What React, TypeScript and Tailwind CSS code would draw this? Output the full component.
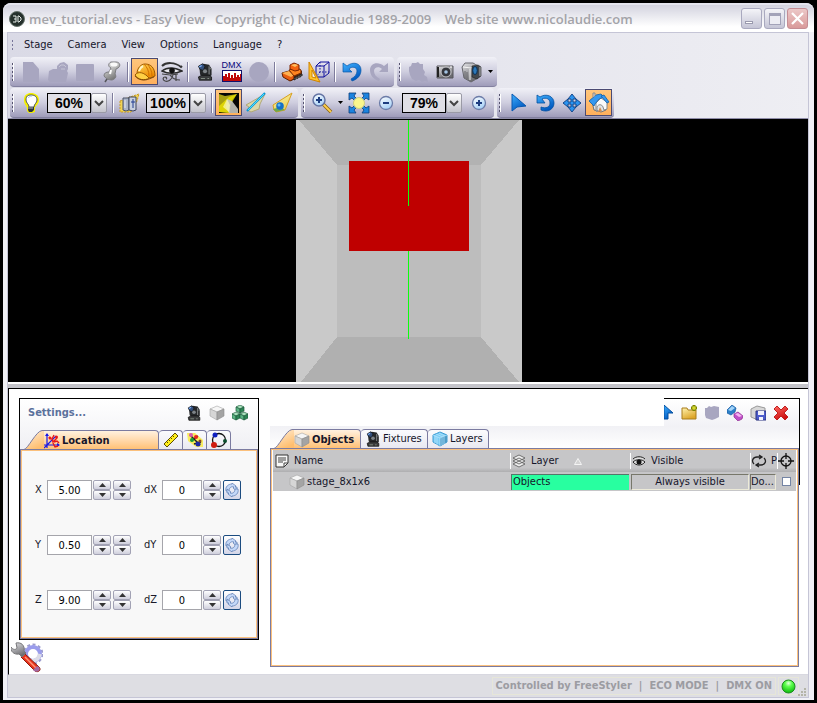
import type { ReactNode } from "react";

const UI = "font-['DejaVu_Sans_Condensed','DejaVu_Sans',sans-serif]";

function Svg({ size = 22, children }: { size?: number; children: ReactNode }) {
  return (
    <svg width={size} height={size} viewBox={`0 0 ${size} ${size}`} fill="none" aria-hidden="true" className="shrink-0">
      {children}
    </svg>
  );
}

function Gradients() {
  const list: [string, string, string][] = [
    ["gBlue", "#3fb0ff", "#0058c0"],
    ["gOrange", "#ffd95c", "#ee8a00"],
    ["gGray", "#ffffff", "#777777"],
    ["gFolder", "#fff3ae", "#dda528"],
    ["gRed", "#ff6a62", "#cc1010"],
    ["gBeam", "#fff9a8", "#e8cc5a"],
    ["gGlass", "#ffffff", "#a9d2f7"],
    ["gTab", "#fff1df", "#ffbe6e"],
    ["gSteel", "#e4e4e8", "#6c6c70"],
  ];
  return (
    <svg className="absolute size-0" aria-hidden="true">
      <defs>
        {list.map(([id, a, b]) => (
          <linearGradient key={id} id={id} x1="0" y1="0" x2="0.5" y2="1">
            <stop offset="0" stopColor={a} />
            <stop offset="1" stopColor={b} />
          </linearGradient>
        ))}
        <radialGradient id="gLed" cx="0.5" cy="0.25" r="0.75">
          <stop offset="0" stopColor="#e4ffe0" />
          <stop offset="0.35" stopColor="#5cff4c" />
          <stop offset="1" stopColor="#0cb80c" />
        </radialGradient>
      </defs>
    </svg>
  );
}

const OFF = "#a8a6c0";

const NewIcon = () => <Svg><path d="M3 1h10l6 7v13H3z" fill={OFF} /></Svg>;
const OpenIcon = () => (
  <Svg>
    <path d="M2 10l4-2h4V5l3-3 4-1 4 3v4l-1 2 1 2-2 9H3L1 19z" fill={OFF} />
    <path d="M12 6l2-2h3M17 4l2 2M14 8h4" stroke="#c6c5d6" />
  </Svg>
);
const SaveIcon = () => <Svg><rect x="2" y="3" width="18" height="17" rx="1" fill={OFF} /></Svg>;
const PinIcon = () => (
  <Svg>
    <path d="M8 15l-4 6" stroke="#55555a" strokeWidth="1.5" />
    <path d="M3 15c0-3 2-4 5-4l2-4c-3-1-3-5 0-6h5c4 0 5 4 2 6l-2 1-1 5c2 3 0 5-3 6-3 0-6-1-8-4z" fill="url(#gGray)" stroke="#7c7c80" />
    <ellipse cx="13" cy="3.500" rx="3.500" ry="2" fill="#fafafa" />
    <path d="M10 9l-1 4" stroke="#fff" strokeWidth="2" />
  </Svg>
);
const HelmetIcon = () => (
  <Svg>
    <path d="M3 13C3 7 7 3 11 3c6 0 10 4 10 12l-5 2z" fill="url(#gOrange)" stroke="#9c5800" />
    <path d="M10 3c3 3 5 7 5 12M13 3c3 3 5 7 5 12" stroke="#d07000" />
    <path d="M1 14c3-4 9-3 14 3-4 3-11 2-14-3z" fill="#ffd044" stroke="#9c5800" />
    <path d="M5 10c1-3 2-4 4-5" stroke="#fff4c4" strokeWidth="2" />
    <path d="M1 15c3 4 9 5 14 3l5-2" stroke="#6c3c00" strokeWidth="0.800" />
  </Svg>
);
const HorusIcon = () => (
  <Svg>
    <path d="M1 5c4-4 13-4 19 1l1-1" stroke="#333" strokeWidth="2" />
    <path d="M1 10c5-4 12-4 20 0-7 3-14 3-20 0z" fill="#eaeaf0" stroke="#2a2a2a" strokeWidth="1.500" />
    <circle cx="11" cy="9.500" r="2.800" fill="#111" />
    <path d="M1 13l8 1 8-1M15 13v7M12 14c-1 5-5 7-8 6-3-1-2-4 0-4s2 2 1 2M9 14c2 3 4 5 10 5" stroke="#444" strokeWidth="1.200" />
  </Svg>
);
const FixtureIcon = ({ size = 22 }: { size?: number }) => (
  <svg width={size} height={size} viewBox="0 0 22 22" fill="none" aria-hidden="true" className="shrink-0">
    <path d="M4 4l5-3 7 1 3 5v8l-3 2H8l-3-3z" fill="#26282a" />
    <path d="M3 4l5-3 3 3-2 5-4-1z" fill="#34507c" stroke="#15181c" />
    <path d="M4 5l3-2" stroke="#7cb0ff" strokeWidth="1.500" />
    <circle cx="11" cy="10" r="2.500" fill="#7e8488" />
    <path d="M16 4v10M17 7h2" stroke="#85888a" strokeWidth="1.300" />
    <path d="M3 17l4-2h9l3 2v4H4z" fill="#3a3c3d" stroke="#111" />
    <path d="M6 19h5M14 19h2" stroke="#93a093" />
  </svg>
);
const DmxIcon = () => (
  <span className="flex w-5 flex-col items-center">
    <span className="h-[9px] font-['Liberation_Sans',sans-serif] text-[9px] leading-[9px] text-[#08087c]">DMX</span>
    <svg width="20" height="12" viewBox="0 0 20 12" aria-hidden="true">
      <rect width="20" height="12" fill="#10106c" />
      <rect x="1" y="1" width="18" height="10" fill="#fff" />
      <path d="M1 11V6h2V4h2v3h1V3h2v5h1V5h2v3h1V3h2v4h1V5h2v2h1V4h1v7z" fill="#c00808" />
    </svg>
  </span>
);
const DiscIcon = () => <Svg><circle cx="11" cy="11" r="10" fill={OFF} /></Svg>;
const DozerIcon = () => (
  <Svg>
    <path d="M2 15l8 5 11-6v-4l-6-2-12 4z" fill="#4c2410" />
    <path d="M1 12l7-2 5 4v4l-4 2-7-4z" fill="#e85c10" stroke="#5c2000" />
    <path d="M1 12l7-2 5 4-3 2z" fill="#ffb050" />
    <path d="M8 9l7-3 5 3v3l-7 3z" fill="#ff8420" stroke="#7c2c00" />
    <path d="M9 4l4-2 5 2v5l-4 1-5-2z" fill="#f46410" stroke="#7c2400" />
    <path d="M10 4l4-1 3 1-3 2z" fill="#ffc060" />
    <path d="M13 19l8-4v-2l-8 4z" fill="#555" stroke="#222" strokeDasharray="2 1" />
  </Svg>
);
const SetSquareIcon = () => (
  <Svg>
    <path d="M8 5h8v11H8zM8 5l4-4h9v11l-5 4M16 5l5-4" stroke="#10109c" />
    <path d="M12 1v10h9M12 11l-4 5" stroke="#10109c" strokeDasharray="1.500 1.500" />
    <path d="M1 1v17l11 3z" fill="#ffc42c" stroke="#d08400" />
    <path d="M4 9v7l4 1z" fill="#f4f4f8" stroke="#d08400" />
  </Svg>
);
const UndoIcon = () => (
  <Svg>
    <path d="M2 2v9h9L8 8c3-3 8-2 8 2 0 3-2 6-6 8l1 2c6-2 9-6 9-11 0-7-8-9-14-4z" fill="url(#gBlue)" stroke="#0858a8" strokeWidth="0.700" />
  </Svg>
);
const RedoIcon = () => (
  <Svg>
    <path d="M20 2v9h-9l3-3c-3-3-8-2-8 2 0 3 2 6 6 8l-1 2C5 18 2 14 2 9c0-7 8-9 14-4z" fill={OFF} />
  </Svg>
);
const BlobIcon = () => (
  <Svg><path d="M2 6l2-1 1-3h4l2-1 2 2h3v5l2 3-1 3 3 2 1 5-3-1-3 1-3-2-3 1-4-2-2-4-1-4z" fill={OFF} /></Svg>
);
const CameraIcon = () => (
  <Svg>
    <path d="M3 5h16v12H3z" fill="url(#gSteel)" stroke="#55555a" />
    <path d="M8 4h7v2H8z" fill="#9a9a9e" />
    <circle cx="12" cy="11" r="5" fill="#34363c" stroke="#c8c8cc" />
    <circle cx="12" cy="11" r="1.800" fill="#a4c4e4" />
    <path d="M4 6v10" stroke="#222" strokeWidth="2" />
    <path d="M16 6h2" stroke="#fff" />
  </Svg>
);
const CamcorderIcon = () => (
  <Svg>
    <path d="M1 6l3-4h8l5 3v12l-7 4-7-4z" fill="url(#gSteel)" stroke="#66666c" />
    <path d="M2 6l8 1 5-3M9 8v11" stroke="#f4f4f4" />
    <path d="M4 10v7M6 11v7" stroke="#66666a" />
    <path d="M11 5l6-1 3 2v9l-4 3-5-2z" fill="#44484c" stroke="#222" strokeWidth="0.600" />
    <ellipse cx="14" cy="9.500" rx="2.300" ry="4" fill="#2c78b8" stroke="#0c2c50" />
    <path d="M19 6v9" stroke="#b4b4b8" />
  </Svg>
);

const BulbIcon = () => (
  <Svg>
    <path d="M4 8c0-5 3-7 7-7s8 2 8 7c0 4-3 5-4 8v4l-3 1H9l-2-2v-3c-1-3-3-4-3-8z" fill="#f4f000" />
    <path d="M6 8c0-4 2-5 5-5s6 1 6 5c0 3-3 4-3 7H9c0-3-3-4-3-7z" fill="#fff" stroke="#3c4450" strokeWidth="0.900" />
    <path d="M8 15h6v3l-2 2h-3l-1-2z" fill="#2c343c" />
    <path d="M8 16h5" stroke="#aeb6be" />
    <path d="M8 6c1-1 2-2 4-2" stroke="#9cc4e8" />
  </Svg>
);
const FogIcon = () => (
  <Svg>
    <path d="M1 9l10-4 9-3-2 7-6 11H1z" fill="#f0d458" stroke="#c89a20" strokeDasharray="2 1" />
    <path d="M4 6h6v12l-3 1-3-1z" fill="#aab4c8" stroke="#4c5468" />
    <path d="M10 5h7v13l-3 1-4-1z" fill="#c8d0e0" stroke="#3c445c" />
    <path d="M14 7v9M12 10h4" stroke="#203c90" />
    <path d="M6 8v8" stroke="#e8ecf4" />
  </Svg>
);
const SpotsIcon = () => (
  <Svg>
    <path d="M1 1h20v20H1z" fill="#050505" />
    <path d="M1 2l6 2 12-2-8 10 1 9-11-1z" fill="#a8a010" />
    <path d="M19 2l-8 3-10 9v6l10 1 2-9z" fill="#f4e800" opacity="0.700" />
    <path d="M9 7l5 2 6 8v4h-9l-3-6z" fill="#c4c4bc" opacity="0.900" />
    <path d="M9 7l3 6-1 7-6-5z" fill="#fffcb0" opacity="0.700" />
  </Svg>
);
const BeamIcon = () => (
  <Svg>
    <path d="M20 2L1 13l3 2-2 3 4 2 8-3 1-5z" fill="#dcd8a8" stroke="#b0a878" />
    <path d="M20 1L2 19" stroke="#0898d8" strokeWidth="2.200" />
    <path d="M19 2L3 18" stroke="#4ce0ff" />
  </Svg>
);
const BeamBallIcon = () => (
  <Svg>
    <path d="M20 1L1 13l1 5 2 2 9-2z" fill="url(#gBeam)" stroke="#d8a020" />
    <path d="M1 17l3 3 9-2-4-3z" fill="#6ca850" />
    <circle cx="8" cy="14" r="3.800" fill="#1470c8" />
    <circle cx="7" cy="13" r="1.500" fill="#5cb8f8" />
  </Svg>
);
const ZoomIcon = () => (
  <Svg>
    <path d="M12 12l8 8" stroke="#8c6410" strokeWidth="3.500" />
    <path d="M12 12l8 8" stroke="#ffd04c" strokeWidth="1.800" />
    <circle cx="8" cy="8" r="6" fill="url(#gGlass)" stroke="#6474a4" strokeWidth="1.500" />
    <path d="M8 5v6M5 8h6" stroke="#1c3c80" strokeWidth="2" />
  </Svg>
);
const FitIcon = () => (
  <Svg>
    {["", "rotate(90 11 11)", "rotate(180 11 11)", "rotate(270 11 11)"].map((t) => (
      <path key={t} transform={t} d="M1 1h7L6 4l4 4-2 2-4-4-3 2z" fill="#1c84e0" stroke="#0c3c78" strokeWidth="0.800" />
    ))}
    <circle cx="11" cy="11" r="5.500" fill="#fbf68c" stroke="#d0cc80" />
  </Svg>
);
const RoundIcon = ({ plus = false }: { plus?: boolean }) => (
  <Svg>
    <circle cx="11" cy="11" r="6.500" fill="url(#gGlass)" stroke="#6c7ca8" strokeWidth="1.300" />
    <path d={plus ? "M11 8v6M8 11h6" : "M8 11h6"} stroke="#1c3c80" strokeWidth="2" />
  </Svg>
);
const PointerIcon = () => (
  <Svg><path d="M5 2v17l5-4 9-1z" fill="url(#gBlue)" stroke="#0858b0" /></Svg>
);
const RotateIcon = () => (
  <Svg>
    <path d="M3 3v8h8L8 7c4-2 8 0 8 4s-4 6-9 4v3c7 3 13-1 13-7C20 4 12 1 6 5z" fill="url(#gBlue)" stroke="#0450a0" strokeWidth="0.800" />
  </Svg>
);
const MoveIcon = () => (
  <Svg>
    <path d="M11 2l4 5h-3v3h3V7l5 4-5 4v-3h-3v3h3l-4 5-4-5h3v-3H7v3l-5-4 5-4v3h3V7H7z" fill="#2c94f0" stroke="#0c3c80" strokeWidth="0.900" />
  </Svg>
);
const HomeIcon = () => (
  <Svg>
    <path d="M4 10l4-4 6-2 5 6-1 8-5 2-3-1-4-1z" fill="#e2e4e6" stroke="#6c7074" />
    <path d="M9 20v-5c1-3 5-3 6 0l1 3 3-1v-7l-6-4-5 5v7z" fill="#fafafa" stroke="#888c90" />
    <path d="M1 9l7-6 5-1 3 3-5 2-4 5-1 2-2-2z" fill="#3498f0" stroke="#1060a8" strokeWidth="0.800" />
    <path d="M13 4l3-1 5 7-2 1z" fill="#3498f0" stroke="#1060a8" strokeWidth="0.800" />
    <path d="M5 5V1h2v3" fill="#ddd" stroke="#888" />
    <path d="M10 20l2-5 2 4z" fill="#d08c50" />
  </Svg>
);

const CubeIcon = () => (
  <Svg size={16}>
    <path d="M8 1l7 3-7 3-7-3z" fill="#f6f6f6" stroke="#a4a4a4" strokeWidth="0.600" />
    <path d="M1 4l7 3v8l-7-4z" fill="#d6d6d6" stroke="#a4a4a4" strokeWidth="0.600" />
    <path d="M15 4L8 7v8l7-4z" fill="#a4a4a4" stroke="#8c8c8c" strokeWidth="0.600" />
  </Svg>
);
const GreenCubesIcon = () => (
  <Svg size={16}>
    {[[4, 0], [0, 7], [8, 7]].map(([x, y]) => (
      <g key={`${x}-${y}`} transform={`translate(${x} ${y})`} stroke="#1c5c3c" strokeWidth="0.700">
        <path d="M4 0l4 2-4 2-4-2z" fill="#a8e0bc" />
        <path d="M0 2l4 2v4L0 6z" fill="#5cb484" />
        <path d="M8 2L4 4v4l4-2z" fill="#2c8454" />
      </g>
    ))}
  </Svg>
);
const AxesIcon = () => (
  <Svg size={16}>
    <path d="M3 1v14M0 12h15M0 15L12 3" stroke="#1818e8" strokeWidth="1.200" />
    <path d="M1 3l2-3 2 3zM13 10l3 2-3 2z" fill="#1818e8" />
    <path d="M5 4l2 2M10 2l-2 4 1 3 4-4M10 9l3-1 2 2M9 10l2 4 3-1" stroke="#e81818" strokeWidth="1.400" />
    <circle cx="12.500" cy="4" r="1.500" fill="#e81818" />
    <circle cx="6" cy="5" r="1.500" fill="#e81818" />
  </Svg>
);
const RulerIcon = () => (
  <Svg size={16}>
    <path d="M1 12L12 1l3 3L4 15z" fill="#ffee1c" stroke="#5c4c00" />
    <path d="M4 10l1 1M6 8l1 1M8 6l1 1M10 4l1 1" stroke="#5c4c00" />
  </Svg>
);
const BallsIcon = () => (
  <Svg size={16}>
    <path d="M0 1l8 0 8 7v7h-7L1 9z" fill="#f8ec60" />
    <path d="M3 3l10 10M4 9l7-5M7 12l7-2" stroke="#222" strokeWidth="1.500" />
    <circle cx="4" cy="3" r="2" fill="#d858b0" />
    <circle cx="9" cy="5" r="2" fill="#e82020" />
    <circle cx="5" cy="8" r="2" fill="#189c38" />
    <circle cx="11" cy="12" r="2.500" fill="#1c28a8" />
    <circle cx="13" cy="9" r="1.500" fill="#884820" />
  </Svg>
);
const OrbitIcon = () => (
  <Svg size={16}>
    <circle cx="8" cy="8" r="6.500" stroke="#111" strokeWidth="1.300" />
    <circle cx="4" cy="3" r="2.500" fill="#1020c0" />
    <circle cx="14" cy="9" r="2" fill="#0c4c2c" />
    <circle cx="3" cy="13" r="3" fill="#d01c10" />
  </Svg>
);
const LayerCubeIcon = () => (
  <Svg size={16}>
    <path d="M1 4l7-3 7 3v7l-7 4-7-4z" fill="#7cccf4" stroke="#3c9cd4" />
    <path d="M8 7l7-3v7l-7 4z" fill="#4c9cc8" />
    <path d="M3 5v7M5 6v8M8 7v8M1 4l7 3 7-3M10 7v7M12 6v7M4 3l7 3M7 2l6 3" stroke="#bce8ff" strokeWidth="0.700" />
  </Svg>
);
const CycleIcon = () => (
  <Svg size={14}>
    <path d="M1 8c-1-4 2-7 6-7V0l4 3-1 1h2v4L8 5l1-1C6 3 4 5 4 8z" fill="#c4d8f8" stroke="#5878b0" strokeWidth="0.700" />
    <path d="M13 6c1 4-2 7-6 7v1l-4-3 1-1H2V6l4 3-1 1c3 1 5-1 5-4z" fill="#c4d8f8" stroke="#5878b0" strokeWidth="0.700" />
  </Svg>
);
const ToolsIcon = () => (
  <Svg size={32}>
    <circle cx="22" cy="12" r="9.500" stroke="#9c9ccc" strokeWidth="2" strokeDasharray="3 2.500" />
    <circle cx="22" cy="12" r="7" stroke="#9a9cec" strokeWidth="4" />
    <path d="M16 17c4 4 11 2 13-5" stroke="#dcdce8" strokeWidth="4" />
    <path d="M13 11l15 14c3 3-1 6-4 4L10 15z" fill="#e8321c" stroke="#8c1c0c" />
    <path d="M14 15l11 11" stroke="#ff9478" strokeWidth="1.500" />
    <path d="M23 29c4 2 7-1 5-4l-2-1-4 4z" fill="#a468a0" />
    <path d="M0 5c2 3 5 3 6 1L5 1c5-1 9 2 8 8l2 2-4 4-3-3C3 13-1 9 0 5z" fill="url(#gSteel)" stroke="#77777a" />
  </Svg>
);

function Tool({ label, active, children }: { label: string; active?: boolean; children: ReactNode }) {
  return (
    <button
      type="button"
      aria-label={label}
      className={
        active
          ? "flex size-[27px] shrink-0 items-center justify-center border border-[#4b4a72] bg-linear-to-b from-[#ffc67c] to-[#ffb05c]"
          : "flex size-[27px] shrink-0 items-center justify-center"
      }
    >
      {children}
    </button>
  );
}

const Sep = () => <div className="mx-0.5 h-5 w-0.5 shrink-0 border-r border-white bg-[#7e7c9c]" />;

const Grip = () => (
  <div className="mr-[3px] ml-0.5 h-[18px] w-0.5 shrink-0 border-r border-white bg-[repeating-linear-gradient(#55536f_0_2px,transparent_2px_4px)]" />
);

const Caret = () => (
  <svg width="5" height="3" viewBox="0 0 5 3" className="shrink-0" aria-hidden="true">
    <path d="M0 0h5L2.500 3z" fill="#000" />
  </svg>
);

function Group({ children }: { children: ReactNode }) {
  return (
    <div className="flex h-[30px] items-center rounded-sm border-b border-[#82809f] bg-linear-to-b from-[#f1f1f7] via-[#cfcedf] to-[#9f9cba] pr-0.5">
      <Grip />
      {children}
    </div>
  );
}

function Percent({ label, value }: { label: string; value: string }) {
  return (
    <div className="relative mx-[3px] flex h-5 w-[60px] shrink-0">
      <select
        aria-label={label}
        defaultValue={value}
        className="h-5 w-11 appearance-none border border-black bg-[#e0dfe6] text-center font-['Liberation_Sans',sans-serif] text-sm leading-4 font-bold text-black"
      >
        <option>{value}</option>
      </select>
      <span className="pointer-events-none flex h-5 w-4 items-center justify-center rounded-xs border border-[#9a9aa6] bg-linear-to-b from-white to-[#c4c4cc]">
        <svg width="10" height="8" viewBox="0 0 10 8" fill="none" aria-hidden="true">
          <path d="M1 2l4 4 4-4" stroke="#444" strokeWidth="2" />
        </svg>
      </span>
    </div>
  );
}

function Spinner({ label }: { label: string }) {
  const btn =
    "flex h-[10px] w-[18px] items-center justify-center rounded-xs border border-[#a2a2b4] bg-linear-to-b from-white to-[#cfcfdc]";
  return (
    <div className="flex shrink-0 flex-col">
      <button type="button" aria-label={`${label} up`} className={btn}>
        <svg width="7" height="4" viewBox="0 0 7 4" aria-hidden="true"><path d="M0 4l3.500-4L7 4z" fill="#333" /></svg>
      </button>
      <button type="button" aria-label={`${label} down`} className={btn}>
        <svg width="7" height="4" viewBox="0 0 7 4" aria-hidden="true"><path d="M0 0h7L3.500 4z" fill="#333" /></svg>
      </button>
    </div>
  );
}

function AxisRow({ axis, value }: { axis: string; value: string }) {
  const field = "h-5 border border-[#a5a5ab] bg-white text-center text-[11px] text-black";
  return (
    <div className="flex h-5 items-center text-[11px] text-[#1a1a2a]">
      <label htmlFor={axis} className="w-3">{axis}</label>
      <input id={axis} defaultValue={value} className={`${field} w-[45px]`} />
      <div className="ml-px flex gap-0.5">
        <Spinner label={`${axis} coarse`} />
        <Spinner label={`${axis} fine`} />
      </div>
      <label htmlFor={`d${axis}`} className="ml-[13px] w-[18px]">d{axis}</label>
      <input id={`d${axis}`} defaultValue="0" className={`${field} w-10`} />
      <div className="ml-px flex gap-0.5">
        <Spinner label={`d${axis}`} />
        <button type="button" aria-label={`Apply d${axis}`} className="flex h-5 w-[18px] items-center justify-center rounded-xs border border-[#1c4c80] bg-linear-to-b from-white to-[#d4d6e8]">
          <CycleIcon />
        </button>
      </div>
    </div>
  );
}

const Slope = () => (
  <svg width="24" height="20" viewBox="0 0 24 20" className="-mb-px shrink-0" aria-hidden="true">
    <path d="M4 20C8 19 16 1 22 0.500h2V20z" fill="url(#gTab)" />
    <path d="M0 19.500h4C8 19 16 1 22 0.500h2" fill="none" stroke="#7b7ba0" />
  </svg>
);

function Tab({ active, label, icon, text, className }: { active?: boolean; label?: string; icon: ReactNode; text?: string; className: string }) {
  return (
    <button
      type="button"
      role="tab"
      aria-selected={!!active}
      aria-label={label}
      className={`flex items-center border-t border-r border-[#7b7ba0] text-[11px] text-[#15152a] ${
        active
          ? "-mb-px h-5 gap-0.5 rounded-tr-sm bg-linear-to-b from-[#fff1df] to-[#ffbe6e] font-bold"
          : "h-[19px] gap-0.5 rounded-t-sm bg-linear-to-b from-[#fbfbfd] to-[#e9e9f1]"
      } ${className}`}
    >
      {icon}
      {text}
    </button>
  );
}

const winButton = "flex size-[21px] items-center justify-center rounded-[3px] border";

export default function App() {
  return (
    <div className={`flex min-h-screen flex-col bg-black p-[3px] text-[11px] leading-[14px] text-[#15152a] ${UI}`}>
      <Gradients />
      <div className="flex flex-1 flex-col rounded-t-lg bg-[#f1f1f6]">
        <header className="flex h-[29px] items-center rounded-t-lg border-t-2 border-[#e4e4ee] bg-linear-to-b from-[#d3d3df] to-white to-80% pr-[6px] pl-[6px]">
          <Svg size={16}>
            <circle cx="8" cy="8" r="7.500" fill="#25302c" stroke="#66726c" />
            <path d="M4 5h3v6H4M5 8h2M9 5v6h1l2-2V7l-2-2z" stroke="#e8eeea" />
          </Svg>
          <h1 className="ml-1 flex-1 font-['Open_Sans','Noto_Sans',sans-serif] text-[13px] font-semibold whitespace-pre text-[#a3a3a8]">
            mev_tutorial.evs - Easy View   Copyright (c) Nicolaudie 1989-2009    Web site www.nicolaudie.com
          </h1>
          <div className="flex gap-0.5">
            <button type="button" aria-label="Minimize" className={`${winButton} border-[#a9a9bf] bg-linear-to-b from-[#f4f4f8] to-[#c5c5d6]`}>
              <span className="mt-2 mr-1.5 h-[3px] w-2 border border-[#9a9aae] bg-white" />
            </button>
            <button type="button" aria-label="Maximize" className={`${winButton} border-[#a9a9bf] bg-linear-to-b from-[#f4f4f8] to-[#c5c5d6]`}>
              <span className="size-3 border border-t-[3px] border-[#a2a2b8] bg-[#ececf3]" />
            </button>
            <button type="button" aria-label="Close" className={`${winButton} border-[#c58d94] bg-linear-to-b from-[#ecc8c8] to-[#d99a9a]`}>
              <svg width="13" height="13" viewBox="0 0 13 13" aria-hidden="true">
                <path d="M1 1l11 11M12 1L1 12" stroke="#fff" strokeWidth="2.200" />
              </svg>
            </button>
          </div>
        </header>

        <div className="mr-[5px] mb-0.5 ml-1 flex flex-1 flex-col border border-[#c5c5d6] bg-linear-to-r from-[#dadae6] to-[#eeeef3]">
          <nav className="flex h-6 items-center pl-1">
            <div className="mr-[11px] h-[11px] w-px bg-[repeating-linear-gradient(#77759a_0_2px,transparent_2px_4px)]" />
            <div className="flex gap-[15px]">
              {["Stage", "Camera", "View", "Options", "Language", "?"].map((m) => (
                <button key={m} type="button">{m}</button>
              ))}
            </div>
          </nav>

          <div className="flex flex-col gap-px border-b border-[#8e8ca8] pl-0.5">
            <div className="flex gap-[3px]">
              <Group>
                <Tool label="New"><NewIcon /></Tool>
                <Tool label="Open"><OpenIcon /></Tool>
                <Tool label="Save"><SaveIcon /></Tool>
                <Tool label="Pin"><PinIcon /></Tool>
                <Sep />
                <Tool label="Build" active><HelmetIcon /></Tool>
                <Tool label="Show"><HorusIcon /></Tool>
                <Sep />
                <Tool label="Fixtures"><FixtureIcon size={18} /></Tool>
                <Tool label="DMX levels"><DmxIcon /></Tool>
                <Tool label="Record"><DiscIcon /></Tool>
                <Sep />
                <Tool label="Stage builder"><DozerIcon /></Tool>
                <Tool label="Dimensions"><SetSquareIcon /></Tool>
                <Sep />
                <Tool label="Undo"><UndoIcon /></Tool>
                <Tool label="Redo"><RedoIcon /></Tool>
              </Group>
              <Group>
                <Tool label="Render"><BlobIcon /></Tool>
                <Tool label="Snapshot"><CameraIcon /></Tool>
                <Tool label="Video"><CamcorderIcon /></Tool>
                <button type="button" aria-label="Video options" className="flex h-[27px] w-2.5 items-center justify-center"><Caret /></button>
              </Group>
            </div>
            <div className="flex gap-[3px]">
              <Group>
                <Tool label="Ambient light"><BulbIcon /></Tool>
                <Percent label="Ambient level" value="60%" />
                <Sep />
                <Tool label="Beam level"><FogIcon /></Tool>
                <Percent label="Beam intensity" value="100%" />
                <Sep />
                <Tool label="Spots" active><SpotsIcon /></Tool>
                <Tool label="Beam lines"><BeamIcon /></Tool>
                <Tool label="Beam volumes"><BeamBallIcon /></Tool>
              </Group>
              <Group>
                <Tool label="Zoom"><ZoomIcon /></Tool>
                <button type="button" aria-label="Zoom options" className="flex h-[27px] w-2.5 items-center justify-center"><Caret /></button>
                <Tool label="Fit view"><FitIcon /></Tool>
                <Tool label="Zoom out"><RoundIcon /></Tool>
                <Percent label="Zoom level" value="79%" />
                <Tool label="Zoom in"><RoundIcon plus /></Tool>
              </Group>
              <Group>
                <Tool label="Select"><PointerIcon /></Tool>
                <Tool label="Rotate"><RotateIcon /></Tool>
                <Tool label="Move"><MoveIcon /></Tool>
                <Tool label="Home" active><HomeIcon /></Tool>
              </Group>
            </div>
          </div>

          <main className="flex flex-1 flex-col">
            <div className="flex justify-center bg-black pt-px pl-0.5">
              <svg width="226" height="262" viewBox="0 0 226 262" role="img" aria-label="Stage, top view" shapeRendering="crispEdges">
                <rect width="226" height="262" fill="#c9c9c9" />
                <path d="M3 0h220l-38 45H41z" fill="#b2b2b2" />
                <path d="M41 45h144v172H41z" fill="#bdbdbd" />
                <path d="M41 217h144l38 45H5z" fill="#b0b0b0" />
                <rect x="53" y="41" width="120" height="90" fill="#bf0000" />
                <rect x="112" y="0" width="1" height="86" fill="#0cff0c" />
                <rect x="112" y="131" width="1" height="88" fill="#0cff0c" />
              </svg>
            </div>
            <div className="h-[7px] border-t-2 border-b border-t-white border-b-black bg-[#c4c4ca]" />

            <div className="flex flex-1 gap-[11px] border-b border-l border-b-[#d8d8e0] border-l-black bg-white pt-[9px] pr-2 pl-0.5">
              <section className="flex w-[248px] shrink-0 flex-col gap-0.5">
                <div className="ml-2 flex h-[242px] flex-col border border-black bg-linear-to-b from-white to-[#f0f0f4] to-20%">
                  <div className="flex h-[30px] items-center pr-2.5 pb-0.5 pl-2">
                    <h2 className="flex-1 text-[11px] font-bold text-[#5b719c]">Settings...</h2>
                    <div className="flex gap-[7px]">
                      <button type="button" aria-label="Fixture settings"><FixtureIcon size={16} /></button>
                      <button type="button" aria-label="Object settings"><CubeIcon /></button>
                      <button type="button" aria-label="Group settings"><GreenCubesIcon /></button>
                    </div>
                  </div>
                  <div className="flex h-5 items-end" role="tablist">
                    <Slope />
                    <Tab active icon={<AxesIcon />} text="Location" className="w-[115px]" />
                    <Tab label="Size" icon={<RulerIcon />} className="w-6 justify-center" />
                    <Tab label="Color" icon={<BallsIcon />} className="w-6 justify-center" />
                    <Tab label="Orbit" icon={<OrbitIcon />} className="w-6 justify-center" />
                  </div>
                  <div className="flex-1 border border-[#7b7ba0] bg-[#f8f8f8]">
                    <div className="flex h-full flex-col gap-[35px] border border-[#fbc07c] pt-[29px] pl-[13px]">
                      <AxisRow axis="X" value="5.00" />
                      <AxisRow axis="Y" value="0.50" />
                      <AxisRow axis="Z" value="9.00" />
                    </div>
                  </div>
                </div>
                <button type="button" aria-label="Preferences" className="size-8"><ToolsIcon /></button>
              </section>

              <section className="mb-[7px] flex min-w-0 flex-1 flex-col">
                <div className="ml-auto flex h-7 items-center gap-[7px] overflow-hidden border-t border-r border-black bg-linear-to-b from-white to-[#f2f2f6] pr-2.5">
                  <svg width="10" height="16" viewBox="0 0 10 16" aria-hidden="true">
                    <path d="M0 0l9 8H4v6H0z" fill="url(#gBlue)" stroke="#0450a0" />
                  </svg>
                  <button type="button" aria-label="New folder">
                    <Svg size={16}>
                      <path d="M1 3h5l1 2h8v9H1z" fill="url(#gFolder)" stroke="#a87c1c" />
                      <path d="M13 0v6M10 3h6" stroke="#7c8400" strokeWidth="3" />
                      <path d="M13 1v4M11 3h4" stroke="#f4f43c" />
                    </Svg>
                  </button>
                  <button type="button" aria-label="Group">
                    <Svg size={16}><path d="M1 3l2 0 2-2 2 1 3-1 5 1v10l-4 2-3 1-6-2-1-3z" fill={OFF} /></Svg>
                  </button>
                  <button type="button" aria-label="Swap">
                    <Svg size={16}>
                      <path d="M0 5l5-5 4 3-1 4-4 3-4-2z" fill="#2c80c8" stroke="#1458a0" strokeWidth="0.700" />
                      <path d="M1 5l3 1 4-3-3-2z" fill="#a4d4f8" />
                      <path d="M7 9l4-2 5 4-1 3-4 2-4-4z" fill="#c050c8" stroke="#8c2c90" strokeWidth="0.700" />
                      <path d="M8 9l4 3 3-1-4-3z" fill="#f8b4f4" />
                    </Svg>
                  </button>
                  <button type="button" aria-label="Save object">
                    <Svg size={16}>
                      <path d="M1 4l6-3 8 2v9l-7 3-7-3z" fill="#d8d8d8" stroke="#999" />
                      <path d="M6 6h10v9H6z" fill="#4c5ccc" stroke="#2c3484" />
                      <path d="M8 6h6v4H8zM9 12h4v3H9z" fill="#f0f0fa" />
                    </Svg>
                  </button>
                  <button type="button" aria-label="Delete">
                    <Svg size={16}>
                      <path d="M1 4l3-3 4 4 4-4 3 3-4 4 4 4-3 3-4-4-4 4-3-3 4-4z" fill="url(#gRed)" stroke="#c02020" />
                    </Svg>
                  </button>
                </div>
                <div className="flex h-[22px] items-end border-r border-black bg-linear-to-b from-[#f1f1f5] to-white" role="tablist">
                  <Slope />
                  <Tab active icon={<CubeIcon />} text="Objects" className="w-[67px]" />
                  <Tab icon={<FixtureIcon size={16} />} text="Fixtures" className="w-[67px] pl-1" />
                  <Tab icon={<LayerCubeIcon />} text="Layers" className="w-[61px] pl-1" />
                </div>
                <div className="flex flex-1">
                  <div className="min-w-0 flex-1 border border-[#7b7ba0]">
                    <div className="h-full border border-[#fbc07c] pr-px pl-px">
                      <table className="w-full table-fixed border-collapse text-left">
                        <thead>
                          <tr className="h-[22px] bg-linear-to-b from-[#c6c6c8] from-80% to-[#aeaeb0]">
                            <th className="p-0 font-normal">
                              <span className="flex items-center gap-[5px] pl-0.5">
                                <Svg size={14}>
                                  <path d="M1 1h12v8l-4 4H1z" fill="#f8f8f8" stroke="#333" />
                                  <path d="M3 4h8M3 6h8M3 8h5M9 13V9h4" stroke="#444" />
                                </Svg>
                                Name
                              </span>
                            </th>
                            <th className="w-[120px] p-0 font-normal">
                              <span className="flex h-4 items-center gap-[5px] border-l border-white pl-px">
                                <Svg size={14}>
                                  <path d="M7 7l6 3-6 3-6-3zM7 4l6 3-6 3-6-3zM7 1l6 3-6 3-6-3z" fill="#eee" stroke="#555" strokeWidth="0.800" />
                                </Svg>
                                Layer
                                <svg width="8" height="7" viewBox="0 0 8 7" className="ml-2.5" aria-hidden="true">
                                  <path d="M4 0.500L7.500 6.500h-7z" fill="#d4d4d4" stroke="#f4f4f4" />
                                </svg>
                              </span>
                            </th>
                            <th className="w-[120px] p-0 font-normal">
                              <span className="flex h-4 items-center gap-[5px] border-l border-white pl-px">
                                <Svg size={14}>
                                  <path d="M1 5c3-3 9-3 12 0M1 8c3-3 9-3 12 0-3 4-9 4-12 0z" fill="#ddd" stroke="#222" />
                                  <circle cx="7" cy="8" r="2.500" fill="#111" />
                                </Svg>
                                Visible
                              </span>
                            </th>
                            <th className="w-[27px] p-0 font-normal">
                              <span className="flex h-4 items-center gap-1 overflow-hidden border-l border-white">
                                <Svg size={16}>
                                  <path d="M3 11C0 8 2 4 6 4h4M8 2l3 2-3 2M13 5c3 3 1 7-3 7H6M8 10l-3 2 3 2" stroke="#222" strokeWidth="1.300" />
                                </Svg>
                                <span>P</span>
                              </span>
                            </th>
                            <th className="w-[19px] p-0" aria-label="Target">
                              <span className="flex h-4 items-center border-l border-white">
                                <Svg size={16}>
                                  <circle cx="8" cy="8" r="5" stroke="#111" strokeWidth="1.300" />
                                  <path d="M8 0v6M8 10v6M0 8h6M10 8h6" stroke="#111" strokeWidth="1.300" />
                                </Svg>
                              </span>
                            </th>
                          </tr>
                        </thead>
                        <tbody>
                          <tr className="h-[19px] bg-[#c6c6c8]">
                            <td className="p-0">
                              <span className="flex items-center gap-0.5 pl-4"><CubeIcon />stage_8x1x6</span>
                            </td>
                            <td className="p-0">
                              <span className="mx-px block h-4 border-t border-l border-[#55766a] bg-[#28ffa0] pl-px">Objects</span>
                            </td>
                            <td className="p-0">
                              <span className="mx-px block h-4 border border-t-[#77776a] border-r-[#ecead8] border-b-[#ecead8] border-l-[#77776a] text-center">Always visible</span>
                            </td>
                            <td className="p-0">
                              <span className="block h-4 w-[26px] overflow-hidden border border-t-[#77776a] border-r-[#ecead8] border-b-[#ecead8] border-l-[#77776a] whitespace-nowrap">Do...</span>
                            </td>
                            <td className="p-0">
                              <input type="checkbox" aria-label="Targeted" className="mx-auto block size-[9px] appearance-none border border-[#7484a4] bg-white" />
                            </td>
                          </tr>
                        </tbody>
                      </table>
                    </div>
                  </div>
                  <div className="h-[37px] w-px bg-black" />
                </div>
              </section>
            </div>
          </main>

          <footer className="flex h-[22px] items-center justify-end gap-0.5 bg-[#dedee3] pr-0.5 text-[11px] font-bold text-[#9c9ca2]">
            <div className="flex h-[18px] items-center gap-[7px] border border-[#e6e6d8] px-[3px]">
              <span>Controlled by FreeStyler</span>
              <span>|</span>
              <span>ECO MODE</span>
              <span>|</span>
              <span>DMX ON</span>
            </div>
            <div className="flex h-[18px] items-center border border-[#e6e6d8] px-0.5">
              <Svg size={15}><circle cx="7.500" cy="7.500" r="6.500" fill="url(#gLed)" stroke="#1c8c1c" /></Svg>
            </div>
            <svg width="9" height="9" viewBox="0 0 9 9" className="-ml-1 self-end" aria-hidden="true">
              <path d="M7 0h2v2H7zM7 3h2v2H7zM7 6h2v2H7zM4 3h2v2H4zM4 6h2v2H4zM1 6h2v2H1z" fill="#b4b4a8" />
            </svg>
          </footer>
        </div>
      </div>
    </div>
  );
}
